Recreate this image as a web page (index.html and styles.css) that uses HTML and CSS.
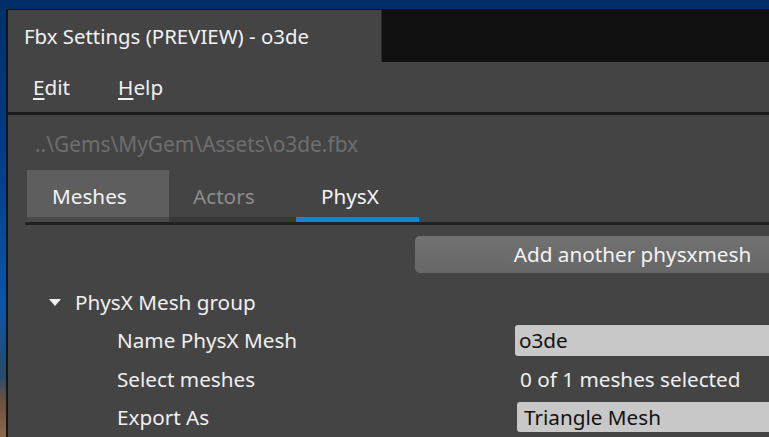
FILE: index.html
```html
<!DOCTYPE html>
<html>
<head>
<meta charset="utf-8">
<link rel="stylesheet" href="styles.css">
</head>
<body>
<div class="window">
  <div class="titlebar">
    <div class="title-tab">Fbx Settings (PREVIEW) - o3de</div>
    <div class="title-rest"></div>
  </div>
  <div class="menubar">
    <span class="menu-item"><u>E</u>dit</span>
    <span class="menu-item"><u>H</u>elp</span>
  </div>
  <div class="separator"></div>
  <div class="content">
    <div class="path">..\Gems\MyGem\Assets\o3de.fbx</div>
    <div class="tabs">
      <div class="tab tab-meshes">Meshes</div>
      <div class="tab tab-actors">Actors</div>
      <div class="tab tab-physx">PhysX</div>
    </div>
    <div class="tab-strip">
      <div class="strip-meshes"></div>
      <div class="strip-actors"></div>
      <div class="strip-physx"></div>
    </div>
    <div class="tab-line"></div>
    <div class="button-row">
      <div class="add-button">Add another physxmesh</div>
    </div>
    <div class="group">
      <div class="group-header">
        <svg class="caret" width="12" height="7" viewBox="0 0 12 7"><polygon points="0,0 12,0 6,7" fill="#f0f0f0"/></svg>
        <span>PhysX Mesh group</span>
      </div>
      <div class="prop-row">
        <div class="prop-label">Name PhysX Mesh</div>
        <div class="prop-value"><div class="text-input">o3de</div></div>
      </div>
      <div class="prop-row">
        <div class="prop-label">Select meshes</div>
        <div class="prop-value"><div class="plain-value">0 of 1 meshes selected</div></div>
      </div>
      <div class="prop-row">
        <div class="prop-label">Export As</div>
        <div class="prop-value"><div class="combo">Triangle Mesh</div></div>
      </div>
    </div>
  </div>
</div>
</body>
</html>
```

FILE: styles.css
```css
html, body {
  margin: 0;
  padding: 0;
  width: 769px;
  height: 437px;
  overflow: hidden;
}
body {
  background: linear-gradient(180deg, #002e68 0%, #003a80 30%, #0b56a8 70%, #2a4a6a 86%, #6a5240 92%, #8a6a50 100%);
  font-family: "Noto Sans", "Open Sans", sans-serif;
  color: #f0f0f0;
}
.window {
  margin: 9px 0 0 6px;
  width: 761px;
  height: 427px;
  overflow: hidden;
  border-top: 1px solid #141414;
  border-left: 2px solid #141414;
  background: #444444;
}
.titlebar {
  display: flex;
  height: 52px;
}
.title-tab {
  width: 357px;
  padding-left: 16px;
  background: #444444;
  font-size: 20.4px;
  line-height: 52px;
  color: #f2f2f2;
}
.title-rest {
  flex: 1;
  background: #101010;
  border-left: 1px solid #2a2a2a;
}
.menubar {
  display: flex;
  height: 50px;
  align-items: center;
  padding-left: 25px;
  gap: 48px;
  font-size: 20.7px;
}
.menu-item u {
  text-underline-offset: 3px;
}
.separator {
  height: 3px;
  background: #1c1c1c;
}
.content {
  padding-left: 17px;
}
.path {
  height: 55px;
  line-height: 58px;
  padding-left: 10px;
  font-size: 20.9px;
  color: #6e6e6e;
}
.tabs {
  display: flex;
  height: 47px;
  padding-left: 2px;
}
.tab {
  font-size: 20.7px;
  line-height: 53px;
  padding-left: 25px;
  box-sizing: border-box;
}
.tab-meshes {
  width: 142px;
  background: #5e5e5e;
  color: #f4f4f4;
}
.tab-actors {
  width: 127px;
  padding-left: 24px;
  color: #8c8c8c;
}
.tab-physx {
  width: 123px;
  color: #f4f4f4;
}
.tab-strip {
  display: flex;
  height: 5px;
  padding-left: 2px;
}
.strip-meshes {
  width: 142px;
  background: #4a4a4a;
}
.strip-actors {
  width: 127px;
  background: #383838;
}
.strip-physx {
  width: 123px;
  background: #0a87d8;
}
.tab-line {
  height: 3px;
  background: #222222;
}
.button-row {
  display: flex;
  padding: 11px 0 0 390px;
  height: 37px;
}
.add-button {
  flex: none;
  width: 435px;
  height: 37px;
  border-radius: 5px;
  background: linear-gradient(180deg, #717171 0%, #6c6c6c 50%, #676767 100%);
  color: #f4f4f4;
  font-size: 20.7px;
  line-height: 37px;
  text-align: center;
}
.group {
  padding-top: 10px;
}
.group-header {
  display: flex;
  align-items: center;
  height: 38px;
  padding-left: 24px;
  gap: 14px;
  font-size: 20.7px;
}
.caret {
  display: block;
}
.prop-row {
  display: flex;
  align-items: center;
  height: 38.5px;
  font-size: 20.7px;
}
.prop-label {
  flex: none;
  width: 490px;
  padding-left: 92px;
  box-sizing: border-box;
}
.prop-value {
  flex: 1;
}
.text-input {
  height: 31px;
  line-height: 31px;
  background: #c8c8c8;
  color: #111111;
  border-radius: 3px 0 0 3px;
  padding-left: 4px;
}
.plain-value {
  padding-left: 5px;
  color: #f0f0f0;
}
.combo {
  margin-left: 2px;
  height: 30px;
  line-height: 30px;
  background: #c8c8c8;
  color: #111111;
  border-radius: 3px 0 0 3px;
  padding-left: 7px;
}
```
